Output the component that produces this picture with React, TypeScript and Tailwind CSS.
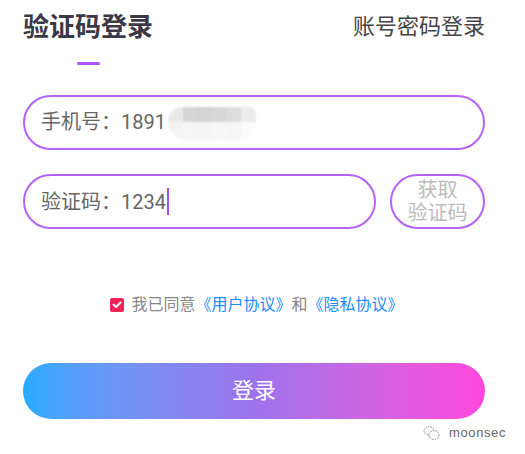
import React, { useState } from 'react';

const FONT = "font-['Roboto','Noto_Sans_CJK_SC',sans-serif]";

// pixelated blur that hides the rest of the phone number
const MASK_TOP = ['#e9e9e9', '#d6d6d6', '#d4d4d4', '#d7d7d7', '#dcdcdc', '#ececec'];
const MASK_BOTTOM = ['#f4f4f4', '#f6f6f6', '#f5f5f5', '#f7f7f7', '#f6f6f6', '#fbfbfb'];

const MaskedDigits: React.FC = () => (
  <div className="ml-[2px] mt-[10px] grid grid-cols-6 w-[88px] h-[33px] rounded-tl-[14px] rounded-bl-[18px] rounded-br-[16px] rounded-tr-[6px] overflow-hidden blur-[1px]">
    {MASK_TOP.map((c, i) => (
      <div key={'t' + i} className="h-[15px]" style={{ backgroundColor: c }} />
    ))}
    {MASK_BOTTOM.map((c, i) => (
      <div key={'b' + i} className="h-[18px]" style={{ backgroundColor: c }} />
    ))}
  </div>
);

const App: React.FC = () => {
  const [agreed, setAgreed] = useState(true);

  return (
    <div className={`relative min-h-[454px] bg-white pl-[23px] pr-[40px] pt-[14px] ${FONT}`}>
      {/* tabs */}
      <div className="flex justify-between items-start">
        <div className="flex flex-col items-center">
          <h1 className="text-[26px] leading-[26px] font-bold text-[#3b3946]">验证码登录</h1>
          <div className="mt-[22px] h-[3px] w-[23px] rounded-full bg-[#ad52f7]" />
        </div>
        <button className="text-[22px] leading-[26px] text-[#444]">账号密码登录</button>
      </div>

      {/* phone */}
      <div className="mt-[30px] h-[55px] rounded-full border-2 border-[#b463f6] flex items-start pl-[16px]">
        <span className="mt-[11px] text-[20px] leading-[28px] text-[#666]">手机号：1891</span>
        <MaskedDigits />
      </div>

      {/* code */}
      <div className="mt-[24px] flex gap-[14px]">
        <div className="flex-1 h-[55px] rounded-full border-2 border-[#b463f6] flex items-center pl-[16px]">
          <span className="text-[20px] leading-[28px] text-[#666]">验证码：1234</span>
          <span className="ml-[1px] h-[27px] w-[2px] bg-[#a34ff5]" />
        </div>
        <button className="w-[95px] h-[55px] rounded-full border-2 border-[#b463f6] flex flex-col items-center justify-center text-[20px] leading-[23px] text-[#bbb]">
          <span>获取</span>
          <span>验证码</span>
        </button>
      </div>

      {/* agreement */}
      <div className="mt-[65px] pl-[6px] flex justify-center items-center h-[22px] text-[16px] leading-[22px]">
        <button
          onClick={() => setAgreed(!agreed)}
          className={`mr-[7px] w-[14px] h-[14px] rounded-[2px] flex items-center justify-center ${agreed ? 'bg-[#f5225a]' : 'border border-[#ccc]'}`}
        >
          {agreed && (
            <svg width="10" height="8" viewBox="0 0 10 8">
              <polyline points="1.5,3.5 4,6 8.5,1.5" fill="none" stroke="#fff" strokeWidth="1.8" strokeLinecap="round" strokeLinejoin="round" />
            </svg>
          )}
        </button>
        <span className="text-[#888]">我已同意</span>
        <span className="text-[#1f8bff]">《用户协议》</span>
        <span className="text-[#888]">和</span>
        <span className="text-[#1f8bff]">《隐私协议》</span>
      </div>

      {/* submit */}
      <button className="mt-[47px] w-full h-[56px] rounded-full bg-gradient-to-r from-[#22aaff] via-[#9c73ea] to-[#ff45dc] text-white text-[22px] leading-[28px]">
        登录
      </button>

      {/* watermark */}
      <div className="absolute right-[19px] top-[425px] flex items-center gap-[9px] text-[#666]">
        <svg width="17" height="16" viewBox="0 0 17 16" fill="none" stroke="#888" strokeWidth="1" strokeDasharray="1.5 1">
          <ellipse cx="6" cy="6" rx="5" ry="4.2" />
          <ellipse cx="11" cy="10" rx="5" ry="4.3" fill="#fff" />
        </svg>
        <span className="font-['Liberation_Sans',sans-serif] text-[13px] leading-[16px] tracking-[0.6px]">moonsec</span>
      </div>
    </div>
  );
};

export default App;
